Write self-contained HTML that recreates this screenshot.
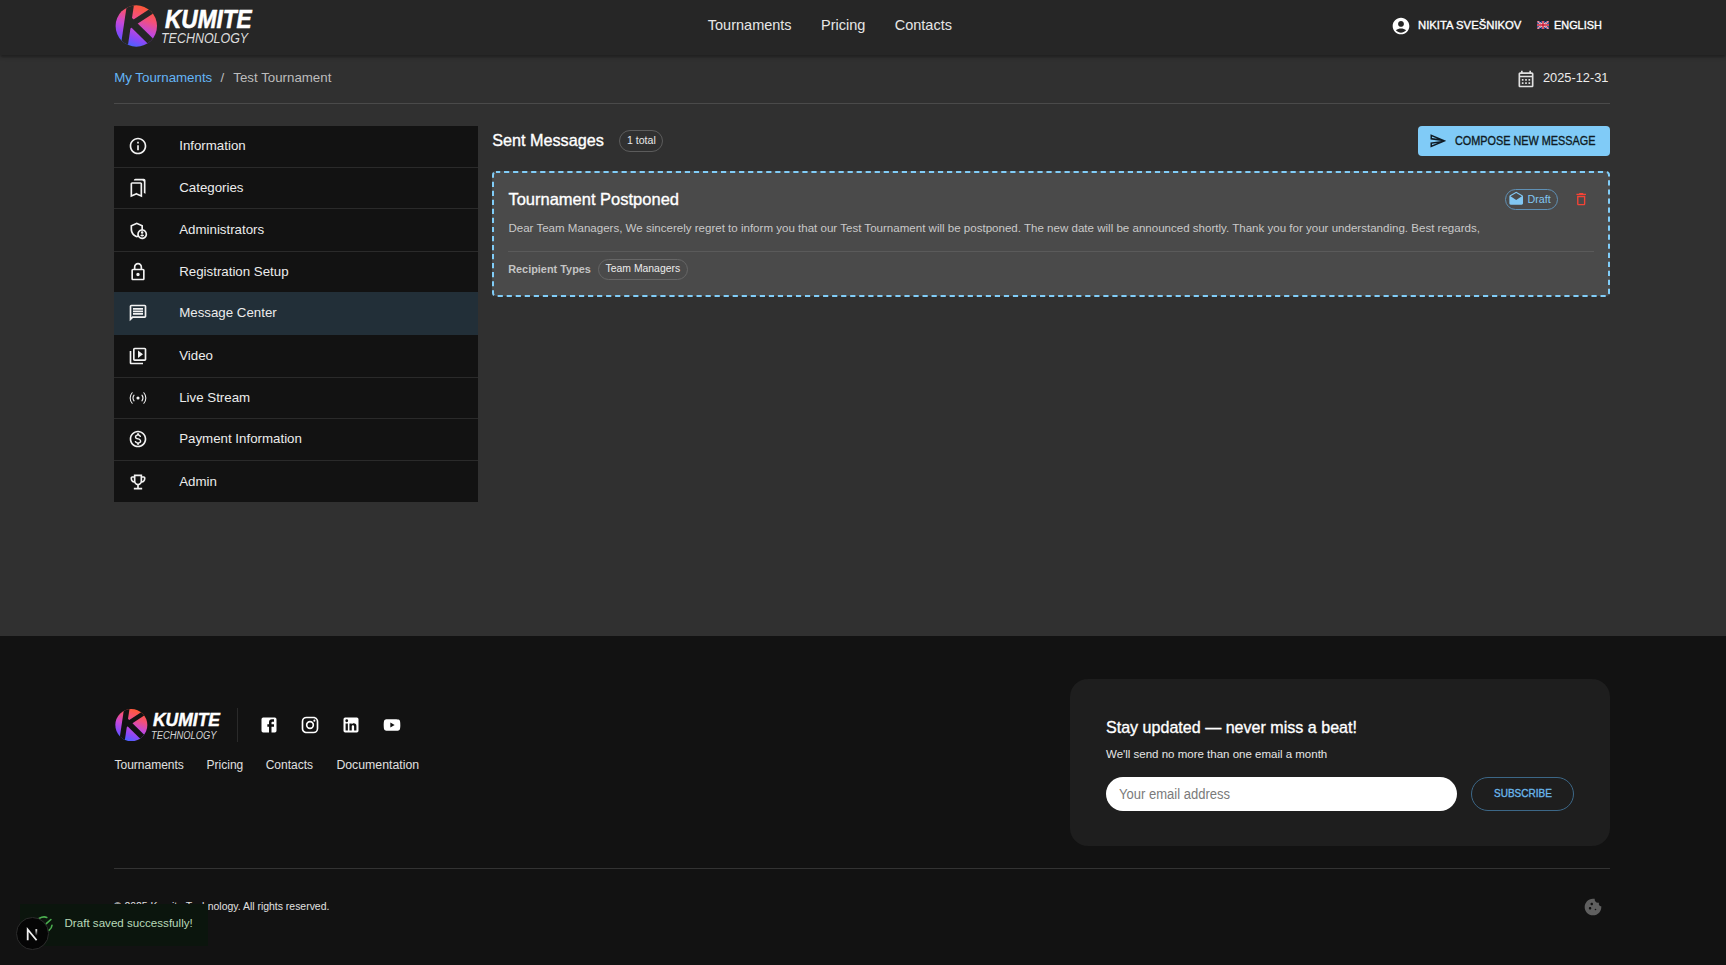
<!DOCTYPE html><html><head><meta charset="utf-8"><style>
html,body{margin:0;padding:0;width:1726px;height:965px;overflow:hidden;background:#303030;font-family:"Liberation Sans",sans-serif}
.t{position:absolute;white-space:nowrap;line-height:1}
.r{position:absolute}
</style></head><body>
<div class="r" style="left:0px;top:0px;width:1726px;height:54.5px;background:#262626;box-shadow:0 3px 2px -1px rgba(0,0,0,.18),0 2px 3px 0 rgba(0,0,0,.13),0 1px 6px 0 rgba(0,0,0,.1);z-index:2"></div>
<div class="r" style="left:0;top:0;width:1726px;height:55px;z-index:3">
<svg class="r" style="left:110px;top:0px;width:52px;height:52px" viewBox="0 0 52 52">
<defs><linearGradient id="g1" gradientUnits="userSpaceOnUse" x1="35" y1="5" x2="19" y2="47"><stop offset="0" stop-color="#ff5a2a"/><stop offset="0.3" stop-color="#f4507a"/><stop offset="0.55" stop-color="#c648d8"/><stop offset="0.78" stop-color="#8a48f7"/><stop offset="1" stop-color="#3f66ff"/></linearGradient>
<clipPath id="g1c"><circle cx="26.3" cy="26" r="20.7"/></clipPath></defs>
<g clip-path="url(#g1c)"><rect width="52" height="52" fill="url(#g1)"/>
<path d="M21.43 -2 L13.1 54" stroke="#262626" stroke-width="7" fill="none"/>
<path d="M17.8 26.6 L51.3 4.75" stroke="#262626" stroke-width="5.66" fill="none"/>
<path d="M18 19.1 L53.7 54.1" stroke="#262626" stroke-width="7.3" fill="none"/>
</g></svg>
<div class="t" style="left:165px;top:5.70px;font-size:26px;color:#fff;font-weight:700;-webkit-text-stroke-width:0.6px;font-style:italic;transform:scaleX(0.87);transform-origin:0 0;">KUMITE</div>
<div class="t" style="left:161px;top:30.35px;font-size:15px;color:#dcdcdc;font-style:italic;transform:scaleX(0.83);transform-origin:0 0;">TECHNOLOGY</div>
<div class="t" style="left:707.8px;top:18.07px;font-size:14.5px;color:#e6e6e6;">Tournaments</div>
<div class="t" style="left:821.1px;top:18.07px;font-size:14.5px;color:#e6e6e6;">Pricing</div>
<div class="t" style="left:894.7px;top:18.07px;font-size:14.5px;color:#e6e6e6;">Contacts</div>
<svg class="r" style="left:1391px;top:15.5px;width:20px;height:20px" viewBox="0 0 24 24"><path fill="#fff" d="M12 2C6.48 2 2 6.48 2 12s4.48 10 10 10 10-4.48 10-10S17.52 2 12 2m0 4c1.93 0 3.5 1.57 3.5 3.5S13.93 13 12 13s-3.5-1.57-3.5-3.5S10.07 6 12 6m0 14c-2.03 0-4.43-.82-6.14-2.88C7.55 15.8 9.68 15 12 15s4.45.8 6.14 2.12C16.43 19.18 14.03 20 12 20"/></svg>
<div class="t" style="left:1418px;top:19.50px;font-size:11.3px;color:#fff;-webkit-text-stroke-width:0.35px;">NIKITA SVEŠNIKOV</div>
<svg class="r" style="left:1537px;top:20.5px;width:12px;height:8px" viewBox="0 0 60 40"><rect width="60" height="40" fill="#012169"/><path d="M0 0L60 40M60 0L0 40" stroke="#fff" stroke-width="8"/><path d="M0 0L60 40M60 0L0 40" stroke="#C8102E" stroke-width="4"/><path d="M30 0V40M0 20H60" stroke="#fff" stroke-width="12"/><path d="M30 0V40M0 20H60" stroke="#C8102E" stroke-width="7"/></svg>
<div class="t" style="left:1554.2px;top:19.50px;font-size:11.3px;color:#fff;-webkit-text-stroke-width:0.35px;transform:scaleX(0.964);transform-origin:0 0;">ENGLISH</div>
</div>
<div class="t" style="left:114.2px;top:70.59px;font-size:13.3px;color:#64b5f6;">My Tournaments</div>
<div class="t" style="left:220.5px;top:70.59px;font-size:13.3px;color:#bdbdbd;">/</div>
<div class="t" style="left:233.3px;top:70.59px;font-size:13.3px;color:#bdbdbd;">Test Tournament</div>
<svg class="r" style="left:1516px;top:68.5px;width:20px;height:20px" viewBox="0 0 24 24"><path fill="#e0e0e0" d="M19 4h-1V2h-2v2H8V2H6v2H5c-1.11 0-1.99.9-1.99 2L3 20c0 1.1.89 2 2 2h14c1.1 0 2-.9 2-2V6c0-1.1-.9-2-2-2m0 16H5V10h14zm0-12H5V6h14zM9 14H7v-2h2zm4 0h-2v-2h2zm4 0h-2v-2h2zm-8 4H7v-2h2zm4 0h-2v-2h2zm4 0h-2v-2h2z"/></svg>
<div class="t" style="left:1543.3px;top:71.11px;font-size:13.4px;color:#ececec;transform:scaleX(0.955);transform-origin:0 0;">2025-12-31</div>
<div class="r" style="left:114px;top:103px;width:1496px;height:1px;background:#4a4a4a"></div>
<div class="r" style="left:114px;top:125.7px;width:364px;height:376px;background:#121212"></div>
<div class="r" style="left:114px;top:292.2px;width:364px;height:42.60000000000002px;background:#222f38"></div>
<div class="r" style="left:114px;top:166.9px;width:364px;height:1px;background:#2a2a2a"></div>
<div class="r" style="left:114px;top:208.1px;width:364px;height:1px;background:#2a2a2a"></div>
<div class="r" style="left:114px;top:250.5px;width:364px;height:1px;background:#2a2a2a"></div>
<div class="r" style="left:114px;top:376.5px;width:364px;height:1px;background:#2a2a2a"></div>
<div class="r" style="left:114px;top:417.8px;width:364px;height:1px;background:#2a2a2a"></div>
<div class="r" style="left:114px;top:460.1px;width:364px;height:1px;background:#2a2a2a"></div>
<svg class="r" style="left:128px;top:136.2px;width:20px;height:20px" viewBox="0 0 24 24"><path fill="#f2f2f2" d="M11 7h2v2h-2zm0 4h2v6h-2zm1-9C6.48 2 2 6.48 2 12s4.48 10 10 10 10-4.48 10-10S17.52 2 12 2m0 18c-4.41 0-8-3.59-8-8s3.59-8 8-8 8 3.59 8 8-3.59 8-8 8"/></svg>
<div class="t" style="left:179.2px;top:138.69px;font-size:13.3px;color:#ececec;">Information</div>
<svg class="r" style="left:128px;top:178.1px;width:20px;height:20px" viewBox="0 0 24 24"><path fill="#f2f2f2" d="M15 7v12.97l-4.21-1.81-.79-.34-.79.34L5 19.97V7zm4-6H8.99C7.89 1 7 1.9 7 3h10c1.1 0 2 .9 2 2v13l2 1V3c0-1.1-.9-2-2-2m-4 4H5c-1.1 0-2 .9-2 2v16l7-3 7 3V7c0-1.1-.9-2-2-2"/></svg>
<div class="t" style="left:179.2px;top:180.59px;font-size:13.3px;color:#ececec;">Categories</div>
<svg class="r" style="left:128px;top:220.2px;width:20px;height:20px" viewBox="0 0 24 24"><path fill="#f2f2f2" d="M17 17.5c-.73 0-2.19.36-2.24 1.08.5.71 1.32 1.17 2.24 1.17s1.74-.46 2.24-1.17c-.05-.72-1.51-1.08-2.24-1.08m0-1.09c.83 0 1.5-.67 1.5-1.5s-.67-1.5-1.5-1.5-1.5.67-1.5 1.5.67 1.5 1.5 1.5M18 11.09V6.27L10.5 3 3 6.27v4.91c0 4.54 3.2 8.79 7.5 9.82.55-.13 1.08-.32 1.6-.55C13.18 21.99 14.97 23 17 23c3.31 0 6-2.69 6-6 0-2.97-2.16-5.43-5-5.91M11 17c0 .56.08 1.11.23 1.62-.24.11-.48.22-.73.3-3.17-1-5.5-4.24-5.5-7.74v-3.6l5.5-2.4 5.5 2.4v3.51c-2.84.48-5 2.94-5 5.91m6 4c-2.21 0-4-1.79-4-4s1.79-4 4-4 4 1.79 4 4-1.79 4-4 4"/></svg>
<div class="t" style="left:179.2px;top:222.69px;font-size:13.3px;color:#ececec;">Administrators</div>
<svg class="r" style="left:128px;top:262.3px;width:20px;height:20px" viewBox="0 0 24 24"><path fill="#f2f2f2" d="M18 8h-1V6c0-2.76-2.24-5-5-5S7 3.24 7 6v2H6c-1.1 0-2 .9-2 2v10c0 1.1.9 2 2 2h12c1.1 0 2-.9 2-2V10c0-1.1-.9-2-2-2M9 6c0-1.66 1.34-3 3-3s3 1.34 3 3v2H9zm9 14H6V10h12zm-6-3c1.1 0 2-.9 2-2s-.9-2-2-2-2 .9-2 2 .9 2 2 2"/></svg>
<div class="t" style="left:179.2px;top:264.80px;font-size:13.3px;color:#ececec;">Registration Setup</div>
<svg class="r" style="left:128px;top:303.2px;width:20px;height:20px" viewBox="0 0 24 24"><path fill="#f2f2f2" d="M4 4h16v12H5.17L4 17.17zm0-2c-1.1 0-1.99.9-1.99 2L2 22l4-4h14c1.1 0 2-.9 2-2V4c0-1.1-.9-2-2-2zm2 10h12v2H6zm0-3h12v2H6zm0-3h12v2H6z"/></svg>
<div class="t" style="left:179.2px;top:305.69px;font-size:13.3px;color:#ececec;">Message Center</div>
<svg class="r" style="left:128px;top:346.09999999999997px;width:20px;height:20px" viewBox="0 0 24 24"><path fill="#f2f2f2" d="M4 6H2v14c0 1.1.9 2 2 2h14v-2H4zm16-4H8c-1.1 0-2 .9-2 2v12c0 1.1.9 2 2 2h12c1.1 0 2-.9 2-2V4c0-1.1-.9-2-2-2m0 14H8V4h12zM12 5.5v9l6-4.5z"/></svg>
<div class="t" style="left:179.2px;top:348.59px;font-size:13.3px;color:#ececec;">Video</div>
<svg class="r" style="left:128px;top:388.20px;width:20px;height:20px" viewBox="0 0 24 24"><g fill="none" stroke="#f2f2f2" stroke-width="1.3" stroke-linecap="round"><path d="M5.01 5.71A9.4 9.4 0 0 0 5.01 18.29M18.99 5.71A9.4 9.4 0 0 1 18.99 18.29M7.23 8.53A5.9 5.9 0 0 0 7.23 15.47M16.77 8.53A5.9 5.9 0 0 1 16.77 15.47"/></g><circle cx="12" cy="12" r="1.9" fill="#f2f2f2"/></svg>
<div class="t" style="left:179.2px;top:390.69px;font-size:13.3px;color:#ececec;">Live Stream</div>
<svg class="r" style="left:128px;top:429.25px;width:20px;height:20px" viewBox="0 0 24 24"><path fill="#f2f2f2" d="M12 2C6.48 2 2 6.48 2 12s4.48 10 10 10 10-4.48 10-10S17.52 2 12 2m0 18c-4.41 0-8-3.59-8-8s3.59-8 8-8 8 3.59 8 8-3.59 8-8 8m.31-8.86c-1.77-.45-2.34-.94-2.34-1.67 0-.84.79-1.43 2.1-1.43 1.38 0 1.9.66 1.94 1.64h1.71c-.05-1.34-.87-2.57-2.49-2.97V5H10.9v1.69c-1.51.32-2.72 1.3-2.72 2.81 0 1.79 1.49 2.69 3.66 3.21 1.95.46 2.34 1.15 2.34 1.87 0 .53-.39 1.39-2.1 1.39-1.6 0-2.23-.72-2.32-1.64H8.04c.1 1.7 1.36 2.66 2.86 2.97V19h2.34v-1.67c1.52-.29 2.72-1.16 2.73-2.77-.01-2.2-1.9-2.96-3.66-3.42"/></svg>
<div class="t" style="left:179.2px;top:431.75px;font-size:13.3px;color:#ececec;">Payment Information</div>
<svg class="r" style="left:128px;top:472.3px;width:20px;height:20px" viewBox="0 0 24 24"><path fill="#f2f2f2" d="M19 5h-2V3H7v2H5c-1.1 0-2 .9-2 2v1c0 2.55 1.92 4.63 4.39 4.94.63 1.5 1.98 2.63 3.61 2.96V19H7v2h10v-2h-4v-3.1c1.63-.33 2.98-1.46 3.61-2.96C19.08 12.63 21 10.55 21 8V7c0-1.1-.9-2-2-2M5 8V7h2v3.82C5.84 10.4 5 9.3 5 8m7 6c-1.65 0-3-1.35-3-3V5h6v6c0 1.65-1.35 3-3 3m7-6c0 1.3-.84 2.4-2 2.82V7h2z"/></svg>
<div class="t" style="left:179.2px;top:474.80px;font-size:13.3px;color:#ececec;">Admin</div>
<div class="t" style="left:492.2px;top:132.23px;font-size:16.2px;color:#fff;-webkit-text-stroke-width:0.35px;">Sent Messages</div>
<div class="r" style="left:619px;top:130px;width:44px;height:22px;box-sizing:border-box;border:1px solid #5c5c5c;border-radius:11px"></div>
<div class="t" style="left:626.9px;top:135.09px;font-size:10.6px;color:#e8e8e8;">1 total</div>
<div class="r" style="left:1418px;top:125.5px;width:192px;height:30.5px;background:#80cbf7;border-radius:4px"></div>
<svg class="r" style="left:1428.5px;top:132px;width:17.8px;height:17.8px" viewBox="0 0 24 24"><path fill="#0f1b24" d="M4.01 6.03l7.51 3.22-7.52-1 .01-2.22m7.5 8.72L4 17.97v-2.22l7.51-1M2.01 3 2 10l15 2-15 2 .01 7L23 12z"/></svg>
<div class="t" style="left:1454.7px;top:135.10px;font-size:12px;color:#0f1b24;-webkit-text-stroke-width:0.35px;transform:scaleX(0.904);transform-origin:0 0;">COMPOSE NEW MESSAGE</div>
<div class="r" style="left:492px;top:170.6px;width:1118px;height:125.9px;background:#4a4a4a;border-radius:4px"></div>
<svg class="r" style="left:492px;top:170.6px;width:1118px;height:126px" viewBox="0 0 1118 126"><rect x="1" y="1" width="1116" height="124" rx="3" fill="none" stroke="#81cdf8" stroke-width="2" stroke-dasharray="5.2 3.84" stroke-dashoffset="1"/></svg>
<div class="t" style="left:508.4px;top:191.17px;font-size:16.5px;color:#fff;-webkit-text-stroke-width:0.35px;">Tournament Postponed</div>
<div class="r" style="left:1505.3px;top:188.7px;width:52.5px;height:21.3px;box-sizing:border-box;border:1px solid #5f90b5;border-radius:11px"></div>
<svg class="r" style="left:1508px;top:191.2px;width:16.4px;height:16.4px" viewBox="0 0 24 24"><path fill="#81c7f3" d="M21.99 8c0-.72-.37-1.35-.94-1.7L12 1 2.95 6.3C2.38 6.65 2 7.28 2 8v10c0 1.1.9 2 2 2h16c1.1 0 2-.9 2-2zM12 13 3.74 7.84 12 3l8.26 4.84z"/></svg>
<div class="t" style="left:1527.5px;top:194.41px;font-size:10.7px;color:#81c7f3;">Draft</div>
<svg class="r" style="left:1572.8px;top:191.4px;width:16.4px;height:16.4px" viewBox="0 0 24 24"><path fill="#f44336" d="M6 19c0 1.1.9 2 2 2h8c1.1 0 2-.9 2-2V7H6zM8 9h8v10H8zm7.5-5-1-1h-5l-1 1H5v2h14V4z"/></svg>
<div class="t" style="left:508.4px;top:223.38px;font-size:11.55px;color:#c9c9c9;">Dear Team Managers, We sincerely regret to inform you that our Test Tournament will be postponed. The new date will be announced shortly. Thank you for your understanding. Best regards,</div>
<div class="r" style="left:508px;top:251px;width:1086px;height:1px;background:#5a5a5a"></div>
<div class="t" style="left:508.2px;top:263.74px;font-size:10.9px;color:#c4c4c4;font-weight:700;">Recipient Types</div>
<div class="r" style="left:598.3px;top:259px;width:90px;height:21.4px;box-sizing:border-box;border:1px solid #666;border-radius:11px"></div>
<div class="t" style="left:605.6px;top:264.16px;font-size:10.4px;color:#ececec;">Team Managers</div>
<div class="r" style="left:0px;top:636px;width:1726px;height:329px;background:#121212"></div>
<svg class="r" style="left:110.7px;top:705.3px;width:40.2px;height:40.2px" viewBox="0 0 52 52">
<defs><linearGradient id="g2" gradientUnits="userSpaceOnUse" x1="35" y1="5" x2="19" y2="47"><stop offset="0" stop-color="#ff5a2a"/><stop offset="0.3" stop-color="#f4507a"/><stop offset="0.55" stop-color="#c648d8"/><stop offset="0.78" stop-color="#8a48f7"/><stop offset="1" stop-color="#3f66ff"/></linearGradient>
<clipPath id="g2c"><circle cx="26.3" cy="26" r="20.7"/></clipPath></defs>
<g clip-path="url(#g2c)"><rect width="52" height="52" fill="url(#g2)"/>
<path d="M21.43 -2 L13.1 54" stroke="#121212" stroke-width="7" fill="none"/>
<path d="M17.8 26.6 L51.3 4.75" stroke="#121212" stroke-width="5.66" fill="none"/>
<path d="M18 19.1 L53.7 54.1" stroke="#121212" stroke-width="7.3" fill="none"/>
</g></svg>
<div class="t" style="left:153.3px;top:710.35px;font-size:19px;color:#fff;font-weight:700;-webkit-text-stroke-width:0.45px;font-style:italic;transform:scaleX(0.92);transform-origin:0 0;">KUMITE</div>
<div class="t" style="left:151.3px;top:728.75px;font-size:11.7px;color:#d4d4d4;font-style:italic;transform:scaleX(0.80);transform-origin:0 0;">TECHNOLOGY</div>
<div class="r" style="left:237px;top:708px;width:1px;height:34px;background:#2a2a2a"></div>
<svg class="r" style="left:258.5px;top:714.5px;width:20px;height:20px" viewBox="0 0 24 24"><path fill="#fff" d="M5 3h14a2 2 0 0 1 2 2v14a2 2 0 0 1-2 2H5a2 2 0 0 1-2-2V5a2 2 0 0 1 2-2m13 2h-2.5A3.5 3.5 0 0 0 12 8.5V11h-2v3h2v7h3v-7h3v-3h-3V9a1 1 0 0 1 1-1h2V5z"/></svg>
<svg class="r" style="left:300px;top:714.5px;width:20px;height:20px" viewBox="0 0 24 24"><path fill="#fff" d="M7.8 2h8.4C19.4 2 22 4.6 22 7.8v8.4a5.8 5.8 0 0 1-5.8 5.8H7.8C4.6 22 2 19.4 2 16.2V7.8A5.8 5.8 0 0 1 7.8 2m-.2 2A3.6 3.6 0 0 0 4 7.6v8.8C4 18.39 5.61 20 7.6 20h8.8a3.6 3.6 0 0 0 3.6-3.6V7.6C20 5.61 18.39 4 16.4 4H7.6m9.65 1.5a1.25 1.25 0 0 1 1.25 1.25A1.25 1.25 0 0 1 17.25 8 1.25 1.25 0 0 1 16 6.750a1.25 1.25 0 0 1 1.25-1.25M12 7a5 5 0 0 1 5 5 5 5 0 0 1-5 5 5 5 0 0 1-5-5 5 5 0 0 1 5-5m0 2a3 3 0 0 0-3 3 3 3 0 0 0 3 3 3 3 0 0 0 3-3 3 3 0 0 0-3-3z"/></svg>
<svg class="r" style="left:340.7px;top:714.5px;width:20px;height:20px" viewBox="0 0 24 24"><path fill="#fff" d="M19 3a2 2 0 0 1 2 2v14a2 2 0 0 1-2 2H5a2 2 0 0 1-2-2V5a2 2 0 0 1 2-2h14m-.5 15.5v-5.3a3.26 3.26 0 0 0-3.26-3.26c-.85 0-1.84.52-2.320 1.3v-1.11h-2.79v8.37h2.79v-4.93c0-.77.62-1.4 1.39-1.4a1.4 1.4 0 0 1 1.4 1.4v4.93h2.79M6.88 8.56a1.68 1.68 0 0 0 1.68-1.68c0-.93-.75-1.69-1.68-1.69a1.69 1.69 0 0 0-1.69 1.69c0 .93.76 1.68 1.69 1.68m1.39 9.94v-8.37H5.5v8.37h2.77z"/></svg>
<svg class="r" style="left:382px;top:714.5px;width:20px;height:20px" viewBox="0 0 24 24"><path fill="#fff" d="M10 15l5.19-3L10 9v6m11.56-7.83c.13.47.22 1.1.28 1.9.07.8.1 1.49.1 2.09L22 12c0 2.19-.16 3.8-.44 4.83-.25.9-.83 1.48-1.73 1.73-.47.13-1.33.22-2.65.28-1.3.07-2.49.1-3.59.1L12 19c-4.19 0-6.8-.16-7.83-.44-.9-.25-1.48-.83-1.73-1.73-.13-.47-.22-1.1-.28-1.9-.07-.8-.1-1.49-.1-2.09L2 12c0-2.19.16-3.8.44-4.83.25-.9.83-1.48 1.73-1.73.47-.13 1.33-.22 2.65-.28 1.3-.07 2.49-.1 3.59-.1L12 5c4.19 0 6.8.16 7.83.44.9.25 1.48.83 1.73 1.730z"/></svg>
<div class="t" style="left:114.5px;top:758.80px;font-size:12px;color:#e0e0e0;">Tournaments</div>
<div class="t" style="left:206.6px;top:758.80px;font-size:12px;color:#e0e0e0;">Pricing</div>
<div class="t" style="left:265.7px;top:758.80px;font-size:12px;color:#e0e0e0;">Contacts</div>
<div class="t" style="left:336.4px;top:758.54px;font-size:12.3px;color:#e0e0e0;">Documentation</div>
<div class="r" style="left:1070px;top:679px;width:540px;height:167px;background:#1e1e1e;border-radius:18px"></div>
<div class="t" style="left:1106px;top:718.85px;font-size:17px;color:#fff;-webkit-text-stroke-width:0.35px;transform:scaleX(0.945);transform-origin:0 0;">Stay updated — never miss a beat!</div>
<div class="t" style="left:1106px;top:748.52px;font-size:11.5px;color:#e6e6e6;">We'll send no more than one email a month</div>
<div class="r" style="left:1106px;top:777px;width:351px;height:33.5px;background:#fff;border-radius:17px"></div>
<div class="t" style="left:1119px;top:786.90px;font-size:14px;color:#7a7a7a;transform:scaleX(0.93);transform-origin:0 0;">Your email address</div>
<div class="r" style="left:1471.4px;top:777px;width:102.2px;height:33.5px;box-sizing:border-box;border:1px solid #3c6787;border-radius:17px"></div>
<div class="t" style="left:1493.8px;top:787.73px;font-size:11.5px;color:#6ab7ec;-webkit-text-stroke-width:0.35px;transform:scaleX(0.87);transform-origin:0 0;">SUBSCRIBE</div>
<div class="r" style="left:114px;top:868px;width:1496px;height:1px;background:#333"></div>
<div class="t" style="left:113.8px;top:902.32px;font-size:10.45px;color:#e0e0e0;">© 2025 Kumite Technology. All rights reserved.</div>
<svg class="r" style="left:1582.5px;top:897px;width:20px;height:20px" viewBox="0 0 24 24"><path fill="#5f5f5f" d="M21.95 10.99c-1.79-.03-3.7-1.95-2.68-4.22-2.97 1-5.78-1.59-5.19-4.56C7.11.74 2 6.41 2 12c0 5.52 4.48 10 10 10 5.89 0 10.54-5.08 9.95-11.01M8.5 15c-.83 0-1.5-.67-1.5-1.5S7.67 12 8.5 12s1.5.67 1.5 1.5S9.33 15 8.5 15m2-5C9.67 10 9 9.33 9 8.5S9.67 7 10.5 7s1.5.67 1.5 1.5-.67 1.5-1.5 1.5m4.5 6c-.55 0-1-.45-1-1s.45-1 1-1 1 .45 1 1-.45 1-1 1"/></svg>
<div class="r" style="left:20px;top:903.6px;width:187.5px;height:42.3px;background:#0b150d"></div>
<svg class="r" style="left:0;top:900px;width:80px;height:60px" viewBox="0 900 80 60"><g stroke="#4caf50" stroke-width="1.6" stroke-linecap="round" fill="none"><path d="M39 918.5Q43.2 916 46.8 917.4"/><path d="M46.3 923.7L50.9 919.5"/><path d="M48.9 930.4Q51.8 928.3 52 925.2"/></g></svg>
<div class="t" style="left:64.5px;top:916.94px;font-size:11.6px;color:#b8d9b8;">Draft saved successfully!</div>
<div class="r" style="left:15.9px;top:917.2px;width:32.8px;height:32.8px;box-sizing:border-box;background:#050505;border:1.2px solid #2c2c2c;border-radius:50%"></div>
<svg class="r" style="left:0;top:900px;width:80px;height:60px" viewBox="0 900 80 60"><defs><linearGradient id="ng" x1="0" y1="0" x2="0" y2="1"><stop offset="0" stop-color="#fff"/><stop offset="1" stop-color="#fff" stop-opacity="0"/></linearGradient></defs><path d="M27.7 940.2V929.5L36.6 940.3" stroke="#f0f0f0" stroke-width="1.8" fill="none" stroke-linejoin="miter"/><rect x="35.4" y="929.2" width="1.8" height="6.5" fill="url(#ng)"/></svg>
</body></html>
